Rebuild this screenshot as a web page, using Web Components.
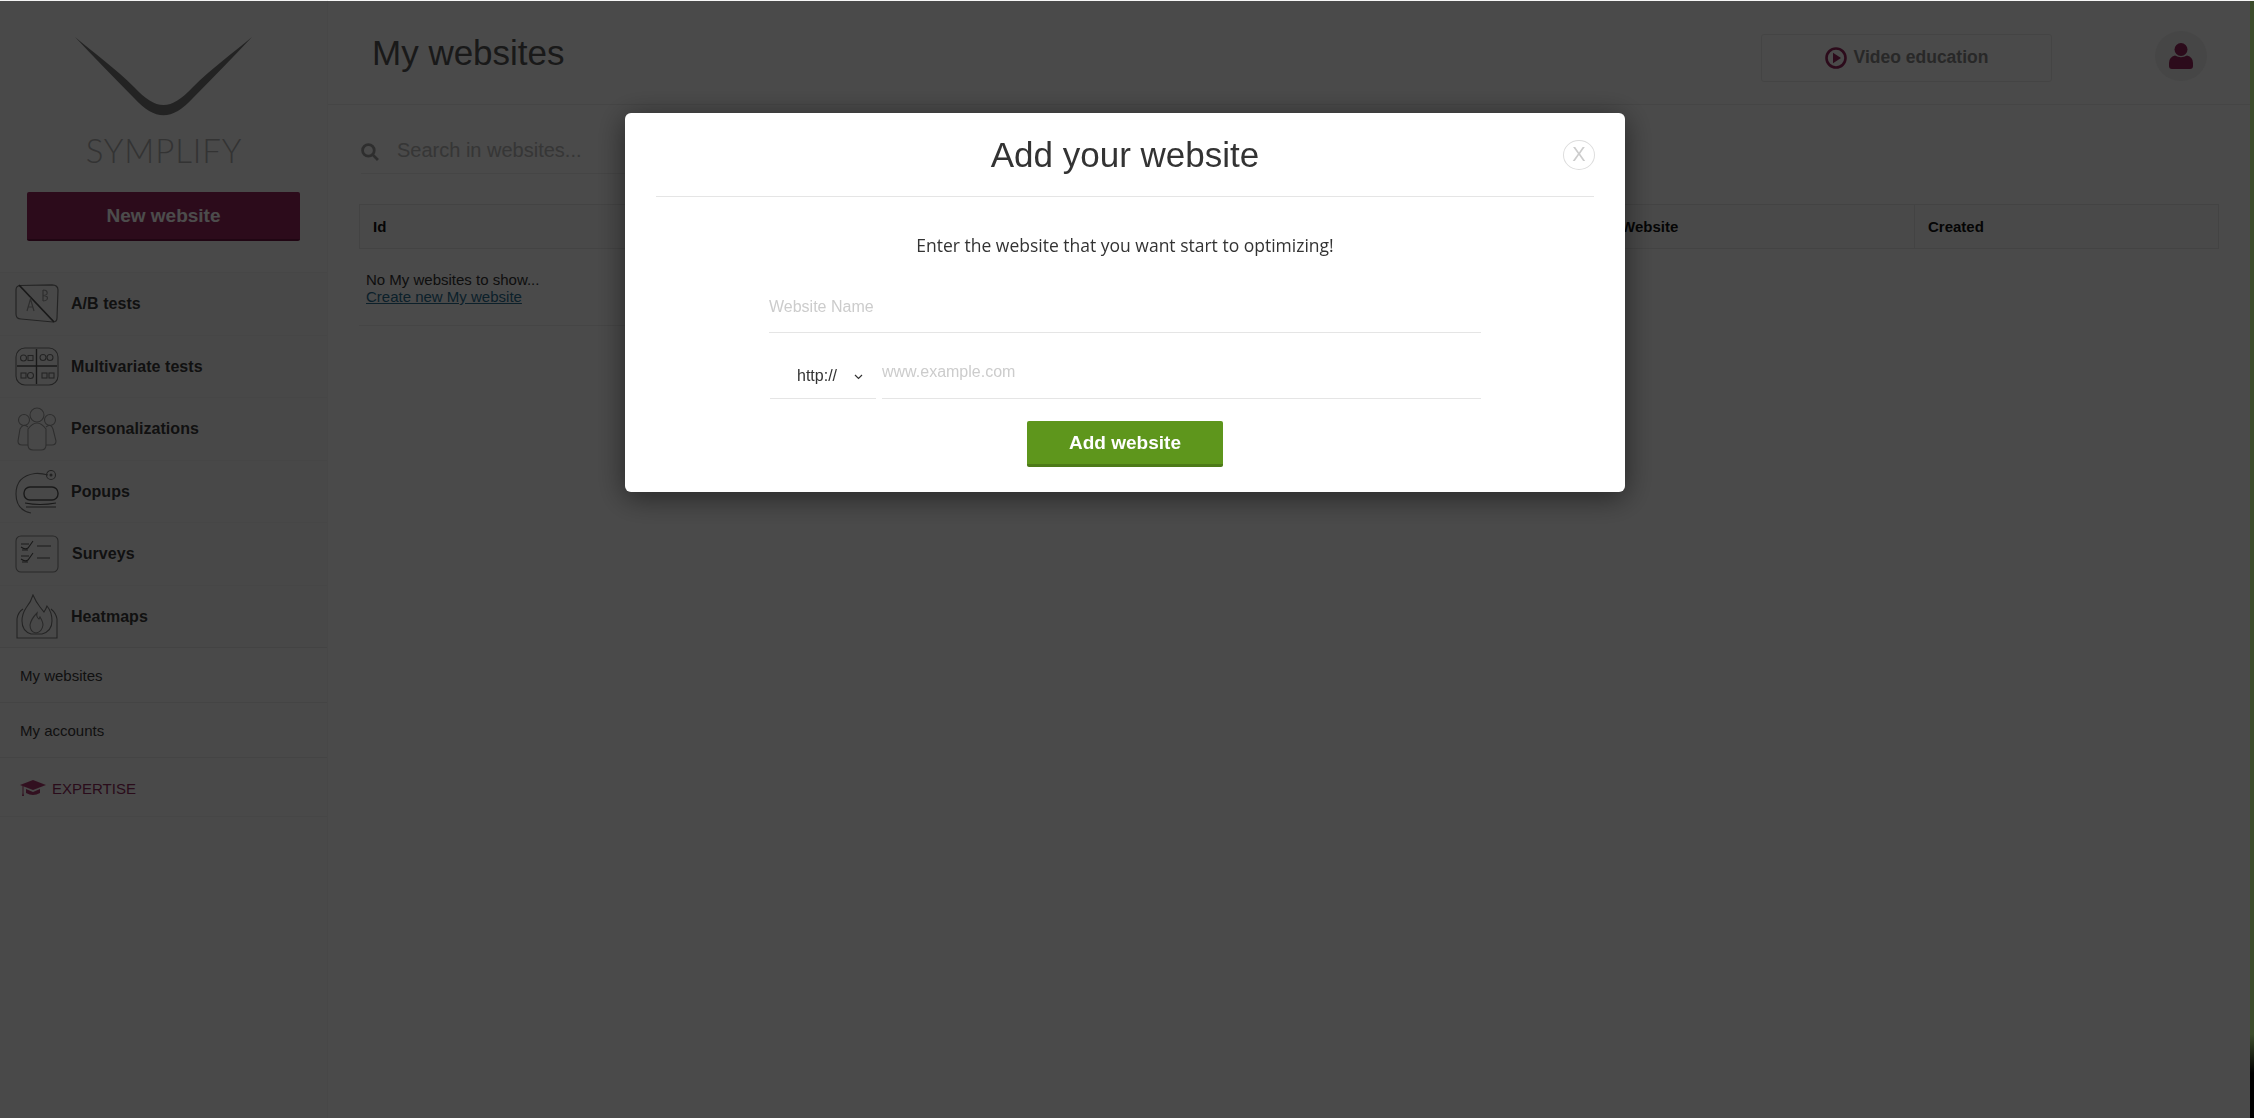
<!DOCTYPE html>
<html lang="en">
<head>
<meta charset="utf-8">
<title>My websites</title>
<style>
  html, body { margin: 0; padding: 0; height: 100%; overflow: hidden; }
  body { background: #fff; font-family: "Liberation Sans", Arial, sans-serif; color: #333; }
</style>
</head>
<body>
<sym-shell>
  <sym-sidebar slot="side">
    <sym-nav-item label="A/B tests">
      <svg slot="icon" width="44" height="40" viewBox="0 0 44 40" fill="none" stroke="#777" stroke-width="1.2">
        <path d="M5 1.5 L37 0.8 Q43 1 43 6 L42 34 Q42 38 38 38 L6 35 Q1 35 1 30 L1 6 Q1 2 5 1.5Z"/>
        <path d="M4 1 L39 38" stroke-width="1.8" stroke="#555"/>
        <path d="M12 27 L15.5 15 L19 27 M13.5 23 H17.5" stroke="#999"/>
        <path d="M28 6 V17 M28 6 Q33 6 32 10 Q31 11.5 28 11.5 Q34 12 32 15.5 Q31 17 28 17" stroke="#999"/>
      </svg>
    </sym-nav-item>
    <sym-nav-item label="Multivariate tests">
      <svg slot="icon" width="44" height="40" viewBox="0 0 44 40" fill="none" stroke="#777" stroke-width="1.1">
        <rect x="1" y="1" width="42" height="37" rx="9"/>
        <path d="M21.5 2 V37 M2 19 H42" stroke="#555" stroke-width="1.4"/>
        <circle cx="8.5" cy="11" r="3"/><rect x="13" y="8.5" width="5" height="5"/>
        <circle cx="28" cy="10.5" r="3"/><circle cx="35" cy="10.5" r="3"/>
        <rect x="6" y="26" width="5" height="5"/><circle cx="15.5" cy="28.5" r="3"/>
        <rect x="27" y="26" width="5" height="5"/><rect x="34" y="26" width="5" height="5"/>
      </svg>
    </sym-nav-item>
    <sym-nav-item label="Personalizations">
      <svg slot="icon" width="44" height="44" viewBox="0 0 44 44" fill="none" stroke="#999" stroke-width="1.1">
        <circle cx="22" cy="8" r="7"/><circle cx="9" cy="13" r="5.5"/><circle cx="35" cy="13" r="5.5"/>
        <path d="M13 22 Q22 10 31 22 V38 Q31 43 26 43 H18 Q13 43 13 38Z"/>
        <path d="M13 20 Q8 16 5 22 L3 34 Q3 38 7 38 H13"/>
        <path d="M31 20 Q36 16 38 22 L41 34 Q41 38 37 38 H31"/>
      </svg>
    </sym-nav-item>
    <sym-nav-item label="Popups">
      <svg slot="icon" width="44" height="44" viewBox="0 0 44 44" fill="none" stroke="#777" stroke-width="1.1">
        <path d="M33 5 Q26 3 20 3.500 Q1 6 1 24 Q1 40 16 43"/>
        <circle cx="36" cy="5" r="4.500"/><circle cx="36" cy="5" r="1" fill="#555"/>
        <rect x="9" y="17" width="34" height="13" rx="6" stroke="#555" stroke-width="1.4"/>
        <path d="M10 33 Q25 36 41 33 M11 37 H41" stroke="#555"/>
      </svg>
    </sym-nav-item>
    <sym-nav-item label="Surveys" shift="1">
      <svg slot="icon" width="44" height="38" viewBox="0 0 44 38" fill="none" stroke="#777" stroke-width="1.1">
        <rect x="1" y="1" width="42" height="36" rx="5" stroke="#888"/>
        <path d="M6 9 H14 M6 12 Q10 15 13 13 L18 6 M7 15 H13" stroke="#555"/>
        <path d="M6 21 H14 M6 24 Q10 27 13 25 L18 18 M7 27 H13" stroke="#555"/>
        <path d="M22 11 H36 M22 23 H35" stroke="#555"/>
      </svg>
    </sym-nav-item>
    <sym-nav-item label="Heatmaps">
      <svg slot="icon" width="44" height="45" viewBox="0 0 44 45" fill="none" stroke="#777" stroke-width="1.1">
        <path d="M8 15 Q3 18 2 25 V44 H42 V25 Q41 19 36 15"/>
        <path d="M18 1 Q21 8 25 13 L29 18 Q31 15 32 12 Q37 18 37 27 Q37 37 27 40 H16 Q7 37 7 27 Q7 20 11 14 Q16 8 18 1Z"/>
        <path d="M22 19 Q21 23 24 25 L25 23 Q28 28 28 31 Q27 38 21 39 Q15 38 15 31 Q16 25 22 19Z" stroke="#888"/>
      </svg>
    </sym-nav-item>
    <sym-side-link size="56" first>My websites</sym-side-link>
    <sym-side-link size="55">My accounts</sym-side-link>
    <sym-side-link size="59" accent>
      <svg width="26" height="17" viewBox="0 0 26 17" fill="#a8386c"><path d="M13 0 L26 5 L13 10 L0 5Z"/><path d="M6 9 L13 12 L20 9 V13 Q13 17 6 13Z"/><path d="M2.500 6 H3.500 V13 L4 16 H2 L2.500 13Z"/></svg>
      EXPERTISE
    </sym-side-link>
  </sym-sidebar>

  <sym-header slot="top" title="My websites"></sym-header>
  <sym-search slot="content" placeholder="Search in websites..."></sym-search>
  <sym-table slot="content"></sym-table>
</sym-shell>

<sym-backdrop>
  <sym-modal heading="Add your website">
    <p>Enter the website that you want start to optimizing!</p>
    <sym-website-form></sym-website-form>
  </sym-modal>
</sym-backdrop>

<script>
function tpl(html) {
  const t = document.createElement("template");
  t.innerHTML = html;
  return t;
}

// base class, every element just clones its template in an open shadow root
class Base extends HTMLElement {
  constructor() {
    super();
    this.attachShadow({ mode: "open" }).append(this.constructor.template.content.cloneNode(true));
  }
}

class SymShell extends Base {
  static template = tpl(`
    <style>
      :host { display: grid; grid-template-columns: 328px 1fr; height: 1118px; background: #f7f7f7; }
      .main { display: flex; flex-direction: column; min-width: 0; padding-right: 4px; }
      .content { display: flex; flex-direction: column; padding: 0 31px 0 31px; }
    </style>
    <slot name="side"></slot>
    <div class="main">
      <slot name="top"></slot>
      <div class="content"><slot name="content"></slot></div>
    </div>
  `);
}

class SymSidebar extends Base {
  static template = tpl(`
    <style>
      :host { display: flex; flex-direction: column; background: #f4f4f4; box-shadow: inset -1px 0 0 #efefef; }
      .logo { height: 192px; display: flex; flex-direction: column; align-items: center; box-sizing: border-box; }
      svg { display: block; margin-top: 36px; }
      .word {
        font: 300 33px Lato, "Liberation Sans", sans-serif; letter-spacing: 0.9px; color: #aaa;
        line-height: 40px; margin-top: 12px;
      }
      .new {
        height: 49px; margin: 0 28px 31px 27px; box-sizing: border-box;
        background: #93255a; border-bottom: 2px solid #6d1742; border-radius: 2px;
        color: #fff; font: bold 19px/48px "Liberation Sans", sans-serif; text-align: center;
      }
    </style>
    <div class="logo">
      <svg width="180" height="82" viewBox="0 0 180 82">
        <path fill="#777" d="M1 1 C20 21 40 42 60 62 C81 85 98 85 119 62 C139 42 159 21 178 1 C159 17 137 33 119 51 C96 75 83 75 60 51 C42 33 20 17 1 1Z"/>
      </svg>
      <div class="word">SYMPLIFY</div>
    </div>
    <div class="new">New website</div>
    <slot></slot>
  `);
}

class SymNavItem extends Base {
  static template = tpl(`
    <style>
      :host {
        display: grid; grid-template-columns: 44px 1fr; column-gap: 12px; align-items: center;
        height: 62.5px; box-sizing: border-box; padding: 1px 0 0 15px;
        border-top: 1px solid #ebebeb; margin-right: 1px;
        background: #f2f2f2;
      }
      .ico { display: flex; align-items: center; justify-content: center; }
      .label { font: bold 16px "Liberation Sans", sans-serif; color: #3a3a3a; letter-spacing: 0.05px; }
    </style>
    <div class="ico"><slot name="icon"></slot></div>
    <div class="label"></div>
  `);
  connectedCallback() {
    const label = this.shadowRoot.querySelector(".label");
    label.textContent = this.getAttribute("label");
    if (this.hasAttribute("shift")) label.style.marginLeft = this.getAttribute("shift") + "px";
  }
}

class SymSideLink extends Base {
  static template = tpl(`
    <style>
      :host {
        display: flex; align-items: center; gap: 6px; box-sizing: border-box; padding-left: 20px;
        border-bottom: 1px solid #e4e4e4; border-top: 0 solid #e0e0e0;
        font: 15px "Liberation Sans", sans-serif; color: #3a3a3a; margin-right: 1px;
      }
      :host([first]) { border-top-width: 1px; }
      :host([accent]) { color: #8e2a5b; padding-top: 3px; border-bottom-color: #ebebeb; }
    </style>
    <slot></slot>
  `);
  connectedCallback() {
    this.style.height = this.getAttribute("size") + "px";
  }
}

class SymHeader extends Base {
  static template = tpl(`
    <style>
      :host {
        display: flex; align-items: center; height: 105px; box-sizing: border-box;
        padding: 0 43px 0 44px; border-bottom: 1px solid #e6e6e6;
      }
      h1 { flex: 1; margin: 2px 0 0; font: normal 35px "Liberation Sans", sans-serif; color: #555; }
      .video {
        width: 291px; height: 48px; box-sizing: border-box; margin: 12px 103px 0 0;
        display: flex; align-items: center; justify-content: center; gap: 7px; padding-bottom: 1px;
        border: 1px solid #e3e3e3; border-radius: 3px;
        font: bold 17.5px "Liberation Sans", sans-serif; color: #888;
      }
      .avatar {
        width: 52px; height: 50px; border-radius: 50%; background: #eaeaea; margin-top: 8px;
        display: flex; align-items: center; justify-content: center;
      }
    </style>
    <h1></h1>
    <div class="video">
      <svg width="22" height="22" viewBox="0 0 22 22"><circle cx="11" cy="11" r="9.500" fill="none" stroke="#93255a" stroke-width="2.600"/><path d="M8 5.800 L16 11 L8 16.200Z" fill="#93255a"/></svg>
      Video education
    </div>
    <div class="avatar">
      <svg width="24" height="26" viewBox="0 0 24 26" fill="#93255a"><circle cx="12" cy="6.500" r="6.500"/><path d="M6 12.500 Q12 16 18 12.500 Q24 14 24 20 V23 Q24 26 21 26 H3 Q0 26 0 23 V20 Q0 14 6 12.500Z"/></svg>
    </div>
  `);
  connectedCallback() {
    this.shadowRoot.querySelector("h1").textContent = this.getAttribute("title");
  }
}

class SymSearch extends Base {
  static template = tpl(`
    <style>
      :host {
        display: flex; align-items: center; gap: 18px; height: 69px; box-sizing: border-box;
        width: 1200px; margin-left: 2px; margin-bottom: 30px; border-bottom: 1px solid #e6e6e6;
        font: 20px "Liberation Sans", sans-serif; color: #b4b4b4; padding-top: 22px;
      }
      svg { margin-top: 3px; }
    </style>
    <svg width="18" height="18" viewBox="0 0 17 17" fill="none" stroke="#999" stroke-width="2.600"><circle cx="7" cy="7" r="5.500"/><path d="M11 11 L16 16"/></svg>
    <span></span>
  `);
  connectedCallback() {
    this.shadowRoot.querySelector("span").textContent = this.getAttribute("placeholder");
  }
}

class SymTable extends Base {
  static template = tpl(`
    <style>
      :host { display: block; font: 15px "Liberation Sans", sans-serif; color: #333; }
      .head {
        display: grid; grid-template-columns: 1247px 307px 1fr; height: 45px; box-sizing: border-box;
        border: 1px solid #e2e2e2; background: #f5f5f5;
        font-weight: bold; font-size: 15px; color: #111;
      }
      .head div { padding-left: 13px; line-height: 43px; border-left: 1px solid #e2e2e2; }
      .head div:first-child { border-left: 0; }
      .empty {
        width: 1000px; height: 77px; box-sizing: border-box; padding: 22px 0 0 7px; line-height: 17px;
        border-bottom: 1px solid #e6e6e6;
      }
      a { color: #2a6d8e; display: block; text-decoration: underline; }
    </style>
    <div class="head"><div>Id</div><div>Website</div><div>Created</div></div>
    <div class="empty">No My websites to show...<a href="#">Create new My website</a></div>
  `);
}

class SymBackdrop extends Base {
  static template = tpl(`
    <style>
      :host {
        position: fixed; top: 1px; left: 0; right: 0; bottom: 0;
        display: flex; justify-content: center; align-items: flex-start;
        padding: 112px 4px 0 0; box-sizing: border-box;
        background: linear-gradient(rgba(0,0,0,.7), rgba(0,0,0,.7)) left / calc(100% - 4px) 100% no-repeat,
                    linear-gradient(#3c4c2c 92.5%, #000 96%) right / 4px 100% no-repeat;
      }
    </style>
    <slot></slot>
  `);
}

class SymModal extends Base {
  static template = tpl(`
    <style>
      :host {
        display: block; width: 1000px; height: 379px; box-sizing: border-box; padding: 0 31px;
        background: #fff; border-radius: 6px; box-shadow: 0 5px 30px rgba(0,0,0,.5);
        text-align: center; color: #333;
      }
      .head {
        position: relative; height: 84px; box-sizing: border-box; border-bottom: 1px solid #e5e5e5;
      }
      h2 { margin: 0; font: normal 35px/84px "Liberation Sans", sans-serif; color: #333; }
      .close {
        position: absolute; right: -1px; top: 27px; width: 32px; height: 30px; box-sizing: border-box;
        border: 1px solid #ddd; border-radius: 50%; color: #ccc;
        font: 20px/26px "Liberation Sans", sans-serif; text-align: center;
      }
      ::slotted(p) {
        margin: 0; padding-top: 36px; height: 51px;
        font: 17.5px/25px "Open Sans", sans-serif; color: #333;
      }
    </style>
    <div class="head"><h2></h2><span class="close">X</span></div>
    <slot></slot>
  `);
  connectedCallback() {
    this.shadowRoot.querySelector("h2").textContent = this.getAttribute("heading");
  }
}

class SymWebsiteForm extends Base {
  static template = tpl(`
    <style>
      :host {
        display: flex; flex-direction: column; align-items: center;
        font: 16px "Liberation Sans", sans-serif; margin-top: -1px;
      }
      .field { border-bottom: 1.500px solid #e5e5e5; box-sizing: border-box; text-align: left; color: #ccc; }
      .name { width: 712px; height: 50px; line-height: 48px; }
      .url { display: flex; gap: 6px; width: 712px; height: 66px; margin-bottom: 22px; padding-left: 1px; box-sizing: border-box; }
      .proto {
        width: 106px; height: 66px; padding: 33px 0 0 27px; color: #333; display: flex; gap: 17px;
        line-height: 20px;
      }
      .proto svg { margin-top: 8px; }
      .site { flex: 1; line-height: 49px; padding-top: 14px; height: 66px; }
      button {
        width: 196px; height: 46px; border: 0; border-bottom: 3px solid #4d7a18; border-radius: 2px;
        background: #5e961c; color: #fff; font: bold 19px "Liberation Sans", sans-serif; padding: 0;
      }
    </style>
    <div class="field name">Website Name</div>
    <div class="url">
      <div class="field proto">http://
        <svg width="9" height="6" viewBox="0 0 9 6" fill="none" stroke="#333" stroke-width="1.200"><path d="M1 1 L4.500 4.500 L8 1"/></svg>
      </div>
      <div class="field site">www.example.com</div>
    </div>
    <button type="button">Add website</button>
  `);
}

customElements.define("sym-shell", SymShell);
customElements.define("sym-sidebar", SymSidebar);
customElements.define("sym-nav-item", SymNavItem);
customElements.define("sym-side-link", SymSideLink);
customElements.define("sym-header", SymHeader);
customElements.define("sym-search", SymSearch);
customElements.define("sym-table", SymTable);
customElements.define("sym-backdrop", SymBackdrop);
customElements.define("sym-modal", SymModal);
customElements.define("sym-website-form", SymWebsiteForm);
</script>
</body>
</html>
